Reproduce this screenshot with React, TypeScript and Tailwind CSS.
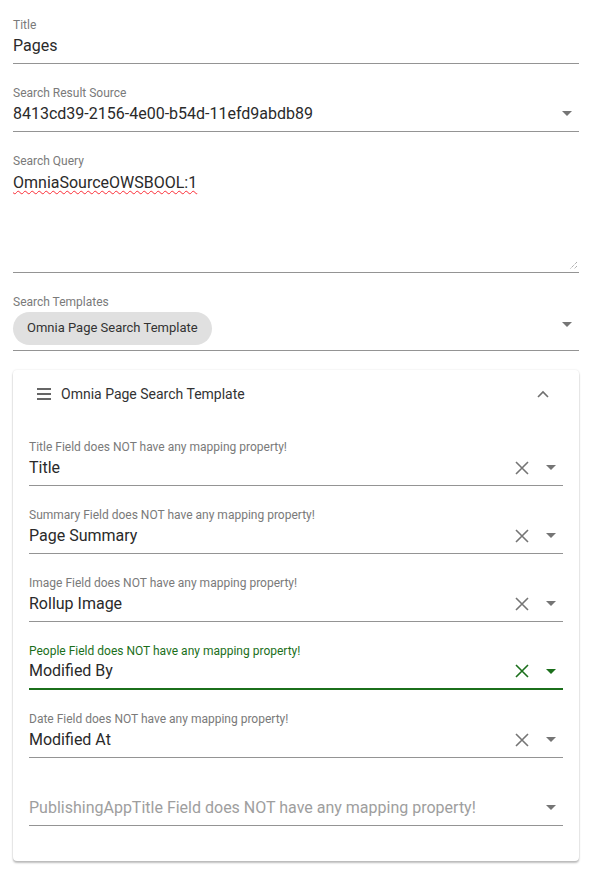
import React from 'react';

const font = { fontFamily: 'Roboto, "Liberation Sans", sans-serif' };

function ArrowDown({ green = false, className = '' }: { green?: boolean; className?: string }) {
  return (
    <div className={`w-6 h-6 flex items-center justify-center ${className}`}>
      <svg width="10" height="5" viewBox="0 0 10 5">
        <path d="M0 0 L10 0 L5 5 Z" fill={green ? '#1b6f1b' : '#757575'} />
      </svg>
    </div>
  );
}

function Close({ green = false }: { green?: boolean }) {
  return (
    <div className="w-6 h-6 mr-[5px] flex items-center justify-center">
      <svg width="14" height="14" viewBox="0 0 14 14">
        <path d="M1 1 L13 13 M13 1 L1 13" stroke={green ? '#1b6f1b' : '#757575'} strokeWidth="1.6" />
      </svg>
    </div>
  );
}

interface FieldProps {
  label?: string;
  value?: string;
  placeholder?: string;
  select?: boolean;
  clearable?: boolean;
  active?: boolean;
  className?: string;
}

function Field({ label, value, placeholder, select, clearable, active, className = '' }: FieldProps) {
  return (
    <div className={className}>
      <div className={`h-4 text-xs leading-4 ${active ? 'text-[#1b6f1b]' : 'text-[#7a7a7a]'}`}>{label}</div>
      <div
        className={`flex items-center h-[31px] pb-[5px] ${
          active ? 'border-b-2 border-[#1b6f1b] pb-[4px]' : 'border-b border-[#949494]'
        }`}
      >
        <div className={`flex-1 text-base leading-5 ${value ? 'text-[#2a2a2a]' : 'text-[#9e9e9e]'}`}>
          {value || placeholder}
        </div>
        {clearable && <Close green={active} />}
        {select && <ArrowDown green={active} />}
      </div>
    </div>
  );
}

const mappings = [
  { label: 'Title Field does NOT have any mapping property!', value: 'Title' },
  { label: 'Summary Field does NOT have any mapping property!', value: 'Page Summary' },
  { label: 'Image Field does NOT have any mapping property!', value: 'Rollup Image' },
  { label: 'People Field does NOT have any mapping property!', value: 'Modified By', active: true },
  { label: 'Date Field does NOT have any mapping property!', value: 'Modified At' },
];

export default function App() {
  return (
    <div className="bg-white min-h-[869px] pl-[13px] pr-3 pt-[17px]" style={font}>
      <Field label="Title" value="Pages" />
      <Field label="Search Result Source" value="8413cd39-2156-4e00-b54d-11efd9abdb89" select className="mt-[21px]" />

      <div className="mt-[21px]">
        <div className="h-4 text-xs leading-4 text-[#7a7a7a]">Search Query</div>
        <div className="relative h-[104px] pt-[2px] border-b border-[#949494]">
          <span className="text-base leading-6 text-[#2a2a2a] underline decoration-wavy decoration-red-500 decoration-1 underline-offset-2">
            OmniaSourceOWSBOOL:1
          </span>
          <svg className="absolute right-[1px] bottom-[2px]" width="10" height="10" viewBox="0 0 10 10">
            <path d="M9 2 L2 9 M9 6 L6 9" stroke="#8a8a8a" strokeWidth="1" strokeDasharray="1 1" />
          </svg>
        </div>
      </div>

      <div className="mt-[21px]">
        <div className="h-4 text-xs leading-4 text-[#7a7a7a]">Search Templates</div>
        <div className="flex items-center h-[41px] pb-[4px] border-b border-[#949494]">
          <div className="flex-1">
            <span className="inline-flex items-center h-[33px] px-[14px] rounded-full bg-[#e0e0e0] text-[13px] text-[#333]">
              Omnia Page Search Template
            </span>
          </div>
          <ArrowDown className="self-start mt-[2px]" />
        </div>
      </div>

      <div className="mt-[19px] bg-white rounded-sm shadow-[0_2px_2px_rgba(0,0,0,0.25),0_0_2px_rgba(0,0,0,0.12)]">
        <div className="flex items-center h-12 pl-6 pr-6">
          <svg width="14" height="12" viewBox="0 0 14 12">
            <path d="M0 1 H14 M0 6 H14 M0 11 H14" stroke="#666" strokeWidth="2" />
          </svg>
          <span className="ml-[10px] text-sm text-[#333] flex-1">Omnia Page Search Template</span>
          <div className="w-6 h-6 flex items-center justify-center">
            <svg width="12" height="8" viewBox="0 0 12 8">
              <path d="M1 7 L6 2 L11 7" stroke="#6f6f6f" strokeWidth="1.6" fill="none" />
            </svg>
          </div>
        </div>
        <div className="px-4 pb-[35px]">
          {mappings.map((m) => (
            <Field
              key={m.label}
              label={m.label}
              value={m.value}
              select
              clearable
              active={m.active}
              className="mt-[21px]"
            />
          ))}
          <Field
            placeholder="PublishingAppTitle Field does NOT have any mapping property!"
            select
            className="mt-[21px]"
          />
        </div>
      </div>
    </div>
  );
}
